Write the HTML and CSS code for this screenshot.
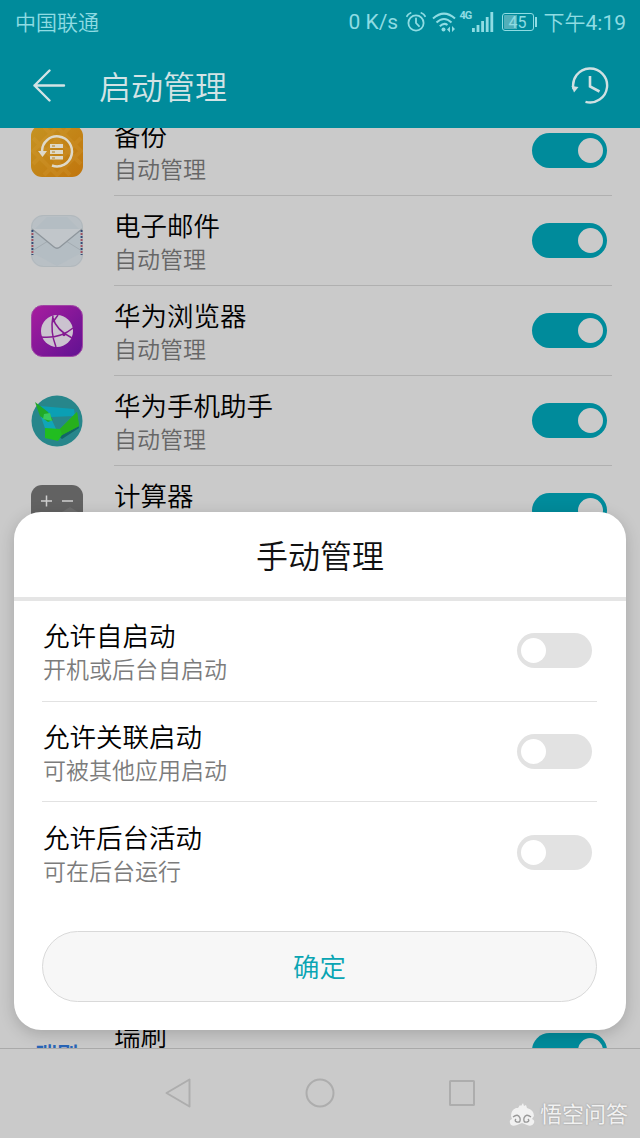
FILE: index.html
```html
<!DOCTYPE html>
<html lang="zh-CN">
<head>
<meta charset="utf-8">
<title>启动管理</title>
<link rel="stylesheet" href="styles.css">
</head>
<body>
<div class="screen">
  <div class="status">
    <span class="carrier">中国联通</span>
    <div class="indicators">
      <span class="speed">0 K/s</span>
      <svg class="alarm" width="20" height="22" viewBox="0 0 20 22" fill="none" stroke="#8fdce3" stroke-width="1.8" stroke-linecap="round"><circle cx="10" cy="12" r="7.6"/><path d="M10 7.5V12l3 3.2M1 5.2Q2 3 4.6 2M19 5.2Q18 3 15.4 2"/></svg>
      <svg class="wifi" width="24" height="22" viewBox="0 0 24 22" fill="none" stroke="#8fdce3" stroke-width="2"><path d="M1 7.5Q12-2.200 23 7.500M4.500 11.500Q12 4.500 19.500 11.500M7.800 15.200Q12 11.200 15.500 14"/><circle cx="11.500" cy="18.500" r="2" fill="#8fdce3" stroke="none"/><path d="M15 18.500l3-3v6zM23 18l-3 3v-6z" fill="#8fdce3" stroke="none"/></svg>
      <span class="network">4G</span>
      <svg class="signal" width="22" height="20" viewBox="0 0 22 20" fill="#8fdce3"><path d="M0 16h2.800v4H0zM4.600 13h2.800v7H4.600zM9.200 9h2.800v11H9.200zM13.800 5h2.800v15h-2.800zM18.400 0h2.800v20h-2.800z"/></svg>
      <span class="battery">45</span>
      <span class="time">下午<span class="digits">4:19</span></span>
    </div>
  </div>
  <header class="header">
    <svg width="34" height="34" viewBox="0 0 34 34" fill="none" stroke="#d3e3e5" stroke-width="2.400" stroke-linecap="round" stroke-linejoin="round"><path d="M17.500 1.500L2.500 16.500 17.500 31.500M2.500 16.500H32"/></svg>
    <h1 class="title">启动管理</h1>
    <svg width="38" height="38" viewBox="0 0 38 38" fill="none" stroke="#d0e0e2" stroke-width="2.400"><path d="M2.500 22A17 17 0 1 1 14.500 34.800"/><path d="M19 9V19.500l9.500 5" stroke-width="2.600"/><path d="M.5 19l7 1-4.500 5.500z" fill="#d0e0e2" stroke="none"/></svg>
  </header>

  <main class="list">
    <section class="row">
      <svg class="icon" viewBox="0 0 52 52"><defs><linearGradient id="gold" x2="1" y2="1"><stop stop-color="#c59422"/><stop offset="1" stop-color="#c1750c"/></linearGradient></defs><rect width="52" height="52" rx="11" fill="url(#gold)"/><path d="M2 26L26 2l24 24-24 24zM13 2l37 37M39 2L2 39M2 13l37 37M50 13L13 50" fill="none" stroke="#d6a13b" stroke-opacity=".25" stroke-width="4"/><path d="M11 26A15 15 0 1 1 21 40.500" fill="none" stroke="#ded9c9" stroke-width="2.500"/><path d="M7 26h9l-4.500 6z" fill="#ded9c9"/><path d="M19 19h13v4H19zM19 25h13v4H19zM19 31h13v3.500H19z" fill="#ded9c9"/><path d="M21 21h3M21 27h3M21 33h3" stroke="#b5801f"/></svg>
      <div class="row-body"><div class="labels"><div class="name">备份</div><div class="desc">自动管理</div></div><span class="toggle on"></span></div>
    </section>
    <section class="row">
      <svg class="icon" viewBox="0 0 52 52"><rect width="52" height="52" rx="12" fill="#b9c0c5"/><path d="M2 16l14-14h20l14 14v22L26 51 2 38z" fill="#b0bac2" opacity=".5"/><path d="M1 36L17 26M51 36L35 26" stroke="#a3abb1"/><path d="M1 14L23 32q3 2.500 6 0L51 14" fill="#c1c6ca" stroke="#8e969c" stroke-width="1.300"/><path d="M1.200 15v25M50.800 15v25" stroke="#344b76" stroke-width="2.400" stroke-dasharray="2 4"/><path d="M1.200 18v22M50.800 18v22" stroke="#a05061" stroke-width="2.400" stroke-dasharray="2 4"/><rect x=".5" y=".5" width="51" height="51" rx="12" fill="none" stroke="#a9afb3" stroke-opacity=".5"/></svg>
      <div class="row-body"><div class="labels"><div class="name">电子邮件</div><div class="desc">自动管理</div></div><span class="toggle on"></span></div>
    </section>
    <section class="row">
      <svg class="icon" viewBox="0 0 52 52"><defs><linearGradient id="violet" x2="1" y2="1"><stop stop-color="#a81d9f"/><stop offset="1" stop-color="#601292"/></linearGradient></defs><rect x=".5" y=".5" width="51" height="51" rx="11" fill="url(#violet)" stroke="#a046a4"/><circle cx="26" cy="26" r="16" fill="#cbc3cf"/><path d="M22 10.500Q19 27 25 42M27 10L22 17M22 13Q25 25 41 33M10 32Q29 34 42 23" fill="none" stroke="#841a91" stroke-width="1.500"/><circle cx="33" cy="29.500" r="1.700" fill="#841a91"/></svg>
      <div class="row-body"><div class="labels"><div class="name">华为浏览器</div><div class="desc">自动管理</div></div><span class="toggle on"></span></div>
    </section>
    <section class="row">
      <svg class="icon" viewBox="0 0 52 52"><circle cx="26" cy="26" r="25.500" fill="#27868b"/><path d="M27 41l20-13 1 5-17 11z" fill="#126668"/><path d="M9 11l34 3 1 7-24 1z" fill="#0b9fb4"/><path d="M10 22l9-1 7 15-10 3z" fill="#10a5b8"/><path d="M4 7l13 10 5 8-5 2-8-6z" fill="#20a927"/><path d="M14 33l15 1 17-17 2 14-17 9-4 6-13-3z" fill="#21bd20"/><path d="M29 34l17-17 2 14-17 9z" fill="#27af1d"/><path d="M13 19l6-1 2 8-9-2z" fill="#39ca5d"/></svg>
      <div class="row-body"><div class="labels"><div class="name">华为手机助手</div><div class="desc">自动管理</div></div><span class="toggle on"></span></div>
    </section>
    <section class="row">
      <svg class="icon" viewBox="0 0 52 52"><rect width="52" height="52" rx="11" fill="#626262"/><path d="M26 30l13-8 13 8v22H26z" fill="#6e6e6e"/><path d="M10 16h11M15.500 10.500v11M31 16h11" stroke="#cfcfcf" stroke-width="1.500"/></svg>
      <div class="row-body"><div class="labels"><div class="name">计算器</div></div><span class="toggle on"></span></div>
    </section>
    <section class="row row-last">
      <div class="icon brand">瑞刷</div>
      <div class="row-body"><div class="labels"><div class="name">瑞刷</div></div><span class="toggle on"></span></div>
    </section>
  </main>

  <nav class="nav">
    <svg width="28" height="32" viewBox="0 0 28 32"><path d="M25.500 2.500v27L2.500 16z"/></svg>
    <svg width="32" height="32" viewBox="0 0 32 32"><circle cx="16" cy="16" r="13.500"/></svg>
    <svg width="28" height="28" viewBox="0 0 28 28"><rect x="2" y="2" width="24" height="24" rx=".5"/></svg>
  </nav>

  <div class="dialog">
    <h2 class="dialog-title">手动管理</h2>
    <div class="options">
      <div class="option"><div><div class="name">允许自启动</div><div class="desc">开机或后台自启动</div></div><span class="toggle"></span></div>
      <div class="option"><div><div class="name">允许关联启动</div><div class="desc">可被其他应用启动</div></div><span class="toggle"></span></div>
      <div class="option"><div><div class="name">允许后台活动</div><div class="desc">可在后台运行</div></div><span class="toggle"></span></div>
    </div>
    <button class="confirm">确定</button>
  </div>

  <div class="watermark">
    <svg width="26" height="24" viewBox="0 0 26 24"><path d="M2 13Q2 7 7 5l2 0 2-3 1 1 2-3 1 3 2-1 1 3q7 2 7 8l-2 3q3 1 2 4-2 4-7 2l-5-2-5 2q-6 2-7-2-1-3 2-4z" fill="#f1f1f1"/><path d="M4 14q5-4 7 1 1 5-3 4-3-1-1-3M22 14q-5-4-7 1-1 5 3 4 3-1 1-3" fill="none" stroke="#999" stroke-width="1.400"/></svg>
    <span>悟空问答</span>
  </div>
</div>
</body>
</html>
```
FILE: styles.css
```css
* { box-sizing: border-box; }

body {
  margin: 0;
  font-family: Roboto, "Noto Sans CJK SC", sans-serif;
  font-weight: 350;
}

.screen {
  position: relative;
  display: flex;
  flex-direction: column;
  width: 640px;
  height: 1138px;
  overflow: hidden;
  background: #cacaca;
}

.status {
  display: flex;
  justify-content: space-between;
  align-items: center;
  height: 44px;
  padding: 1px 14px 0 15px;
  background: #008b9b;
  color: #8fdce3;
  font-size: 21px;
  line-height: 44px;
}

.indicators { display: flex; align-items: center; }
.speed { width: 57px; margin-top: -1px; font-weight: 400; white-space: nowrap; }
.alarm, .wifi, .signal { margin-top: -2px; }
.wifi { margin-left: 6px; }
.network {
  align-self: flex-start;
  margin: 8px 0 0 4px;
  width: 12px;
  font-size: 11px;
  line-height: 14px;
  font-weight: 700;
  letter-spacing: -1px;
}

.battery {
  position: relative;
  width: 32px;
  height: 18px;
  margin: -1px 10px 0 8px;
  border: 1px solid #8fdce3;
  border-radius: 3px;
  background: linear-gradient(90deg, #51afb9 48%, transparent 48%) content-box;
  padding: 1px;
  font-size: 16px;
  font-weight: 400;
  line-height: 15px;
  text-align: center;
}
.battery::after {
  content: "";
  position: absolute;
  right: -4px;
  top: 3px;
  width: 2px;
  height: 10px;
  background: #8fdce3;
}
.time { white-space: nowrap; }
.digits { font-weight: 400; }

.header {
  display: flex;
  align-items: center;
  height: 84px;
  padding: 0 31px 0 32px;
  background: #008b9b;
}
.title {
  flex: 1;
  margin: 3px 0 0 33px;
  color: #d3e3e5;
  font-size: 32px;
  font-weight: 350;
  line-height: 48px;
}

.list { height: 920px; overflow: hidden; }
.row {
  display: flex;
  height: 90px;
  padding: 0 28px 0 31px;
}
.row:first-child { margin-top: -22px; }
.row-last { margin-top: 450px; }

.icon {
  flex: none;
  width: 52px;
  height: 52px;
  margin: 19px 31px 0 0;
}
.brand {
  padding-top: 14px;
  color: #2865b7;
  font-size: 21px;
  font-weight: 700;
  line-height: 32px;
  text-align: center;
}

.row-body {
  display: flex;
  flex: 1;
  justify-content: space-between;
  padding: 13px 5.5px 0 0;
  border-bottom: 1px solid #b0b0b0;
}
.name { color: #000; font-size: 26.5px; line-height: 36px; }
.desc { color: #666; font-size: 23px; line-height: 32px; }

.toggle {
  flex: none;
  width: 75px;
  height: 35px;
  padding: 5px 4px;
  border-radius: 18px;
  background: #e2e2e2;
}
.toggle::before {
  content: "";
  display: block;
  width: 25px;
  height: 25px;
  border-radius: 50%;
  background: #fff;
}
.toggle.on { margin-top: 14px; background: #008b9b; }
.toggle.on::before { margin-left: auto; background: #cacaca; }

.nav {
  display: flex;
  justify-content: space-between;
  align-items: center;
  height: 90px;
  padding: 0 164px 2px;
  border-top: 1px solid #aaa;
}
.nav svg { fill: none; stroke: #adadad; stroke-width: 2; stroke-linejoin: round; }

.dialog {
  position: absolute;
  left: 14px;
  top: 512px;
  width: 612px;
  height: 518px;
  border-radius: 27px;
  background: #fff;
  box-shadow: 0 4px 16px rgba(0, 0, 0, .18);
}
.dialog-title {
  height: 89px;
  margin: 0;
  padding-top: 1px;
  border-bottom: 4px solid #e5e5e5;
  font-size: 32px;
  font-weight: 350;
  line-height: 89px;
  text-align: center;
  color: #111;
}
.options { margin: 0 29px 0 28px; }
.option {
  display: flex;
  justify-content: space-between;
  align-items: flex-start;
  height: 100.6px;
  padding: 18.4px 5px 0 1px;
  border-bottom: 1px solid #e2e2e2;
}
.option:last-child { border-bottom: 0; }
.option .desc { color: #7c7c7c; }
.option .toggle { margin-top: 14px; }

.confirm {
  display: block;
  width: 555px;
  height: 71px;
  margin: 28px 0 0 28px;
  padding: 0 0 2px;
  border: 1px solid #d9d9d9;
  border-radius: 36px;
  background: #f7f7f7;
  color: #0aa5b3;
  font: 350 26.4px/67px "Noto Sans CJK SC", sans-serif;
}

.watermark {
  position: absolute;
  left: 509px;
  top: 1100px;
  display: flex;
  align-items: center;
  gap: 5px;
  color: #f1f1f1;
  font-size: 22px;
  font-weight: 400;
  line-height: 30px;
  white-space: nowrap;
  text-shadow: 0 0 2px #8d8d8d;
}
```
